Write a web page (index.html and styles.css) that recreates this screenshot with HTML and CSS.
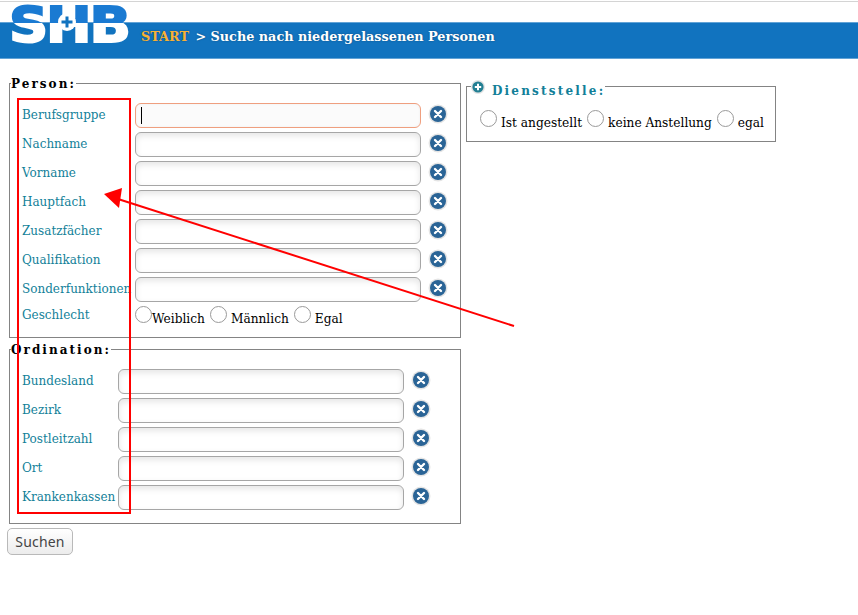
FILE: index.html
```html
<!DOCTYPE html>
<html lang="de">
<head>
<meta charset="utf-8">
<title>Suche nach niedergelassenen Personen</title>
<link rel="stylesheet" href="styles.css">
</head>
<body>
<header class="header">
  <div class="logo"><span class="logo-text">SHB</span><span class="logo-cross"><svg viewBox="0 0 18 18" width="18" height="18"><circle cx="9" cy="9" r="9" fill="#fff"/><path d="M9 3.5v11M3.5 9h11" stroke="#1173bf" stroke-width="3"/></svg></span></div>
  <div class="bar"><span class="crumb">START</span> &gt; Suche nach niedergelassenen Personen</div>
</header>
<main class="main">
  <form class="left">
    <fieldset class="box box-person">
      <legend class="legend">Person:</legend>
      <div class="row"><label class="label">Berufsgruppe</label><div class="input input-focus"><span class="caret"></span></div><svg class="clear" viewBox="0 0 20 20"><circle cx="10" cy="10" r="9.5" fill="#e4e4e4"/><circle cx="10" cy="10" r="8" fill="#2a6496"/><path d="M7 7l6 6M13 7l-6 6" stroke="#fff" stroke-width="2.4" stroke-linecap="round"/></svg></div>
      <div class="row"><label class="label">Nachname</label><div class="input"></div><svg class="clear" viewBox="0 0 20 20"><circle cx="10" cy="10" r="9.5" fill="#e4e4e4"/><circle cx="10" cy="10" r="8" fill="#2a6496"/><path d="M7 7l6 6M13 7l-6 6" stroke="#fff" stroke-width="2.4" stroke-linecap="round"/></svg></div>
      <div class="row"><label class="label">Vorname</label><div class="input"></div><svg class="clear" viewBox="0 0 20 20"><circle cx="10" cy="10" r="9.5" fill="#e4e4e4"/><circle cx="10" cy="10" r="8" fill="#2a6496"/><path d="M7 7l6 6M13 7l-6 6" stroke="#fff" stroke-width="2.4" stroke-linecap="round"/></svg></div>
      <div class="row"><label class="label">Hauptfach</label><div class="input"></div><svg class="clear" viewBox="0 0 20 20"><circle cx="10" cy="10" r="9.5" fill="#e4e4e4"/><circle cx="10" cy="10" r="8" fill="#2a6496"/><path d="M7 7l6 6M13 7l-6 6" stroke="#fff" stroke-width="2.4" stroke-linecap="round"/></svg></div>
      <div class="row"><label class="label">Zusatzfächer</label><div class="input"></div><svg class="clear" viewBox="0 0 20 20"><circle cx="10" cy="10" r="9.5" fill="#e4e4e4"/><circle cx="10" cy="10" r="8" fill="#2a6496"/><path d="M7 7l6 6M13 7l-6 6" stroke="#fff" stroke-width="2.4" stroke-linecap="round"/></svg></div>
      <div class="row"><label class="label">Qualifikation</label><div class="input"></div><svg class="clear" viewBox="0 0 20 20"><circle cx="10" cy="10" r="9.5" fill="#e4e4e4"/><circle cx="10" cy="10" r="8" fill="#2a6496"/><path d="M7 7l6 6M13 7l-6 6" stroke="#fff" stroke-width="2.4" stroke-linecap="round"/></svg></div>
      <div class="row"><label class="label">Sonderfunktionen</label><div class="input"></div><svg class="clear" viewBox="0 0 20 20"><circle cx="10" cy="10" r="9.5" fill="#e4e4e4"/><circle cx="10" cy="10" r="8" fill="#2a6496"/><path d="M7 7l6 6M13 7l-6 6" stroke="#fff" stroke-width="2.4" stroke-linecap="round"/></svg></div>
      <div class="row row-radio"><label class="label">Geschlecht</label><div class="radios"><span class="radio"></span><span class="opt opt-tight">Weiblich</span><span class="radio"></span><span class="opt">Männlich</span><span class="radio"></span><span class="opt">Egal</span></div></div>
    </fieldset>
    <fieldset class="box box-ordination">
      <legend class="legend">Ordination:</legend>
      <div class="row row-narrow"><label class="label">Bundesland</label><div class="input"></div><svg class="clear" viewBox="0 0 20 20"><circle cx="10" cy="10" r="9.5" fill="#e4e4e4"/><circle cx="10" cy="10" r="8" fill="#2a6496"/><path d="M7 7l6 6M13 7l-6 6" stroke="#fff" stroke-width="2.4" stroke-linecap="round"/></svg></div>
      <div class="row row-narrow"><label class="label">Bezirk</label><div class="input"></div><svg class="clear" viewBox="0 0 20 20"><circle cx="10" cy="10" r="9.5" fill="#e4e4e4"/><circle cx="10" cy="10" r="8" fill="#2a6496"/><path d="M7 7l6 6M13 7l-6 6" stroke="#fff" stroke-width="2.4" stroke-linecap="round"/></svg></div>
      <div class="row row-narrow"><label class="label">Postleitzahl</label><div class="input"></div><svg class="clear" viewBox="0 0 20 20"><circle cx="10" cy="10" r="9.5" fill="#e4e4e4"/><circle cx="10" cy="10" r="8" fill="#2a6496"/><path d="M7 7l6 6M13 7l-6 6" stroke="#fff" stroke-width="2.4" stroke-linecap="round"/></svg></div>
      <div class="row row-narrow"><label class="label">Ort</label><div class="input"></div><svg class="clear" viewBox="0 0 20 20"><circle cx="10" cy="10" r="9.5" fill="#e4e4e4"/><circle cx="10" cy="10" r="8" fill="#2a6496"/><path d="M7 7l6 6M13 7l-6 6" stroke="#fff" stroke-width="2.4" stroke-linecap="round"/></svg></div>
      <div class="row row-narrow"><label class="label">Krankenkassen</label><div class="input"></div><svg class="clear" viewBox="0 0 20 20"><circle cx="10" cy="10" r="9.5" fill="#e4e4e4"/><circle cx="10" cy="10" r="8" fill="#2a6496"/><path d="M7 7l6 6M13 7l-6 6" stroke="#fff" stroke-width="2.4" stroke-linecap="round"/></svg></div>
    </fieldset>
    <button class="submit" type="button">Suchen</button>
  </form>
  <fieldset class="box box-dienst">
    <legend class="legend legend-dienst"><svg class="expand" viewBox="0 0 14 14"><circle cx="7" cy="7" r="7" fill="#e4e4e4"/><circle cx="7" cy="7" r="5.6" fill="#237f93"/><path d="M3.8 7h6.4M7 3.8v6.4" stroke="#fff" stroke-width="2"/></svg><span class="legend-title">Dienststelle:</span></legend>
    <div class="radios radios-dienst"><span class="radio"></span><span class="opt">Ist angestellt</span><span class="radio"></span><span class="opt">keine Anstellung</span><span class="radio"></span><span class="opt">egal</span></div>
  </fieldset>
</main>
<svg class="annotation" viewBox="0 0 858 615" width="858" height="615">
  <rect x="18" y="99" width="112" height="414" fill="none" stroke="#f00" stroke-width="2"/>
  <path d="M514 326L118 199" stroke="#f00" stroke-width="2" fill="none"/>
  <path d="M104 194L122 188L119 208Z" fill="#f00"/>
</svg>
</body>
</html>
```
FILE: styles.css
```css
* { box-sizing: border-box; }
html, body { margin: 0; padding: 0; background: #fff; }
body {
  width: 858px;
  height: 615px;
  overflow: hidden;
  position: relative;
  padding-top: 1px;
  font-family: "DejaVu Serif", serif;
  font-size: 12px;
  color: #000;
}
.header { position: relative; padding-top: 20px; border-top: 1px solid #d4d4d4; }
.bar {
  height: 37px;
  padding: 3px 0 0 141px;
  background: #1173bf;
  border-top: 1px solid #62a3d6;
  border-bottom: 1px solid #62a3d6;
  color: #fff;
  font-weight: bold;
  font-size: 12.8px;
  line-height: 22px;
  text-shadow: 0 0 2px rgba(0,0,0,.35);
}
.crumb { color: #f9b233; margin-right: 2px; }
.logo { position: absolute; left: 9px; top: -1px; width: 122px; height: 48px; z-index: 1; }
.logo-text {
  display: block;
  font-family: "DejaVu Sans", sans-serif;
  font-weight: bold;
  font-size: 50px;
  line-height: 48px;
  letter-spacing: -2px;
  transform: scaleX(1.09);
  transform-origin: left top;
  -webkit-text-stroke: 2px transparent;
  background: linear-gradient(#1a7ad2 0, #1a7ad2 22px, #fff 22px);
  -webkit-background-clip: text;
  background-clip: text;
  color: transparent;
}
.logo-cross { position: absolute; left: 49px; top: 12px; width: 18px; height: 18px; }
.logo-cross svg { display: block; }
.main { display: flex; align-items: flex-start; gap: 5px; padding: 0 0 0 7px; }
.left { width: 454px; display: flex; flex-direction: column; flex: none; }
.box { margin: 0; min-width: 0; border: 1px solid #848484; padding: 0; }
.legend {
  margin-left: -11px;
  padding: 2px 0 0;
  font-weight: bold;
  font-size: 12px;
  line-height: 18px;
  letter-spacing: 2.05px;
}
.box-person { margin: 14px 0 0 2px; height: 265px; padding: 8px 0 0 12px; }
.box-ordination { margin: 1px 0 0 2px; height: 185px; padding: 8px 0 0 12px; }
.row { display: flex; align-items: center; height: 29px; }
.label { width: 113px; flex: none; color: #127f99; white-space: nowrap; margin-bottom: 2px; }
.row-narrow .label { width: 96px; }
.input {
  width: 286px;
  height: 25px;
  flex: none;
  border: 1px solid #a6a6a6;
  border-radius: 6px;
  background: #fff;
  box-shadow: inset 0 3px 6px rgba(0,0,0,.1);
  display: flex;
  align-items: center;
  padding-left: 5px;
}
.input-focus { border-color: #ef9f7f; box-shadow: inset 0 0 3px rgba(0,0,0,.05); background: #fbfbfb; }
.caret { width: 1px; height: 17px; background: #000; }
.clear { width: 20px; height: 20px; margin: 0 0 4px 7px; flex: none; }
.row-radio { height: 24px; }
.row-radio .label { align-self: flex-start; margin-top: 4px; }
.radios { display: flex; align-items: flex-start; font-size: 12.2px; }
.radio {
  width: 17px;
  height: 17px;
  flex: none;
  border: 1px solid #9a9a9a;
  border-radius: 50%;
  background: #fff;
}
.opt { margin: 6px 5px 0 4px; line-height: 14px; white-space: nowrap; }
.opt-tight { margin-left: 0; }
.submit {
  align-self: flex-start;
  width: 66px;
  height: 27px;
  margin-top: 4px;
  padding: 0;
  border: 1px solid #b9b9b9;
  border-radius: 5px;
  background: linear-gradient(#fff, #ececec);
  font-family: "Noto Sans", sans-serif;
  font-size: 14px;
  letter-spacing: 0.2px;
  color: #444;
}
.box-dienst { margin-top: 15px; width: 310px; height: 68px; padding: 0 0 0 13px; flex: none; }
.legend-dienst { display: flex; align-items: flex-start; height: 24px; margin-left: -9px; padding: 0; letter-spacing: 2.2px; color: #127f99; }
.expand { width: 14px; height: 14px; margin: 6px 7px 0 0; flex: none; }
.legend-title { margin-top: 8px; }
.radios-dienst { margin-top: 12px; }
.annotation { position: absolute; left: 0; top: 0; pointer-events: none; z-index: 2; }
```
